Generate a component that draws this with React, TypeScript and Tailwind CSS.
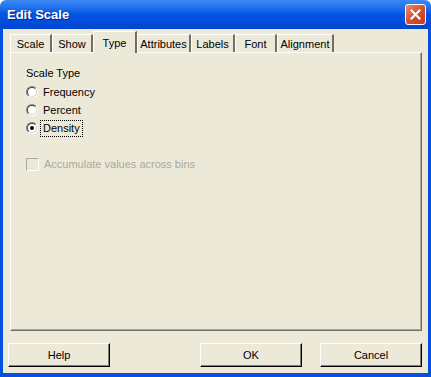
import React from 'react'

const tabs = [
  { label: 'Scale', w: 'w-[42px]' },
  { label: 'Show', w: 'w-[41px]' },
  { label: 'Type', w: 'w-[44px]', active: true },
  { label: 'Attributes', w: 'w-[54px]' },
  { label: 'Labels', w: 'w-[44px]' },
  { label: 'Font', w: 'w-[42px]' },
  { label: 'Alignment', w: 'w-[57px]' },
]

const options = ['Frequency', 'Percent', 'Density']

function Radio({ checked }: { checked?: boolean }) {
  return (
    <span className="relative flex h-[12px] w-[12px] shrink-0 items-center justify-center rounded-full border border-t-[#808080] border-l-[#808080] border-b-white border-r-white">
      <span className="flex h-full w-full items-center justify-center rounded-full border border-t-[#404040] border-l-[#404040] border-b-[#d4d0c8] border-r-[#d4d0c8] bg-white">
        {checked && <span className="h-[4px] w-[4px] rounded-full bg-black" />}
      </span>
    </span>
  )
}

function Button({ label, className }: { label: string; className?: string }) {
  return (
    <button
      className={`h-[24px] w-[102px] border border-t-white border-l-white border-b-black border-r-black bg-[#ece9d8] text-[11px] text-black shadow-[inset_-1px_-1px_0_#808080] ${className ?? ''}`}
    >
      {label}
    </button>
  )
}

export default function App() {
  return (
    <div className="flex h-[377px] w-[431px] flex-col font-['Liberation_Sans',Arial,sans-serif] text-[11px] text-black">
      {/* Title bar */}
      <div className="flex h-[29px] shrink-0 items-center justify-between rounded-t-[6px] bg-gradient-to-b from-[#3d8af5] via-[#0055e3] to-[#0044d0] pl-[7px] pr-[5px]">
        <span className="text-[13px] font-bold text-white [text-shadow:1px_1px_0_#0a1e8c]">
          Edit Scale
        </span>
        <span className="flex h-[21px] w-[21px] items-center justify-center rounded-[3px] border border-white bg-gradient-to-br from-[#e88a6c] via-[#d9502e] to-[#c8381a]">
          <svg width="11" height="11" viewBox="0 0 11 11">
            <path d="M1.5 1.5 L9.5 9.5 M9.5 1.5 L1.5 9.5" stroke="white" strokeWidth="2" strokeLinecap="square" />
          </svg>
        </span>
      </div>

      {/* Client area */}
      <div className="flex flex-1 flex-col border-x-[3px] border-b-[4px] border-[#0250e0] bg-[#ece9d8] px-[5px]">
        {/* Tabs */}
        <div className="relative z-10 mt-[2px] flex h-[21px] items-end pl-[2px]">
          {tabs.map((t) =>
            t.active ? (
              <div
                key={t.label}
                className={`${t.w} -mb-px flex h-[22px] items-start justify-center border-l border-t border-r-2 border-l-white border-t-white border-r-[#716f64] bg-[#ece9d8] pt-[3px]`}
              >
                {t.label}
              </div>
            ) : (
              <div
                key={t.label}
                className={`${t.w} flex h-[18px] items-center justify-center border-l border-t border-r-2 border-l-white border-t-white border-r-[#716f64] pt-px`}
              >
                {t.label}
              </div>
            )
          )}
        </div>

        {/* Panel */}
        <div className="ml-[2px] mr-px flex h-[279px] flex-col border border-l-white border-t-white border-r-[#716f64] border-b-[#716f64] pl-[15px] pt-[14px] shadow-[inset_-1px_-1px_0_#aca899]">
          <div className="leading-[13px]">Scale Type</div>
          <div className="mt-[6px] flex flex-col gap-[6px]">
            {options.map((o, i) => (
              <label key={o} className="flex h-[12px] items-center">
                <Radio checked={i === 2} />
                <span
                  className={`ml-[4px] px-px leading-[13px] ${
                    i === 2 ? 'outline outline-1 outline-dotted outline-black outline-offset-[1px]' : 'outline-none'
                  }`}
                >
                  {o}
                </span>
              </label>
            ))}
          </div>
          <div className="mt-[24px] flex h-[13px] items-center">
            <span className="h-[13px] w-[13px] shrink-0 border border-t-[#aca899] border-l-[#aca899] border-b-white border-r-white" />
            <span className="ml-[5px] text-[#aca899]">Accumulate values across bins</span>
          </div>
        </div>

        {/* Buttons */}
        <div className="mt-[12px] flex">
          <Button label="Help" />
          <Button label="OK" className="ml-[90px]" />
          <Button label="Cancel" className="ml-[18px]" />
        </div>
      </div>
    </div>
  )
}
